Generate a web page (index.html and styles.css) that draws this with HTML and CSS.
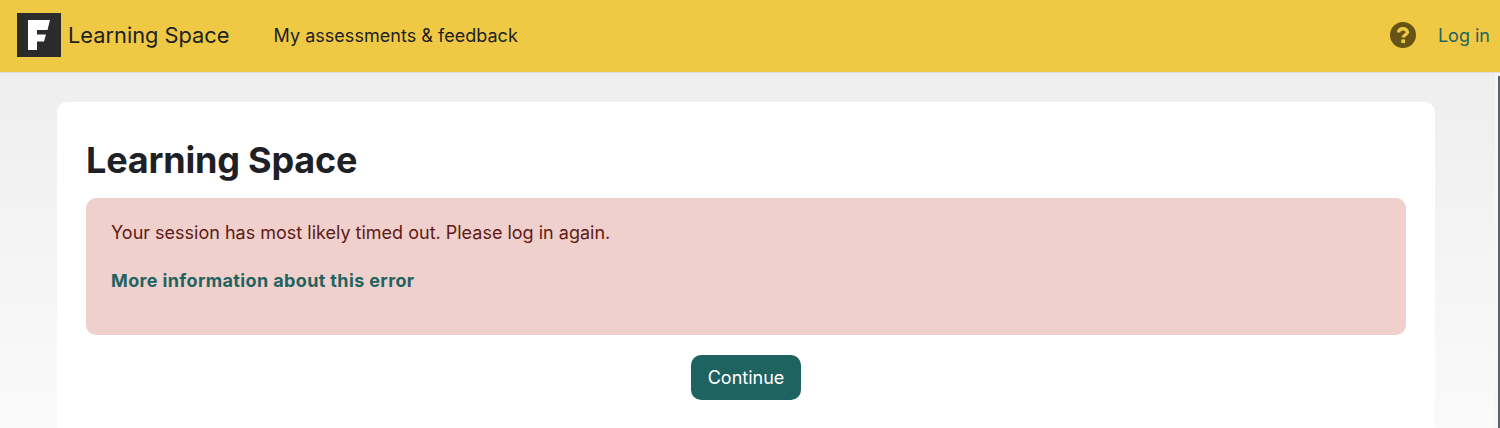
FILE: index.html
```html
<!DOCTYPE html>
<html lang="en">
<head>
  <meta charset="UTF-8" />
  <title>Learning Space</title>
  <link rel="stylesheet" href="styles.css">
</head>
<body>

  <header class="navbar">
    <a class="brand" href="#">
      <span class="logo">
        <svg viewBox="0 0 44 44" width="44" height="44">
          <path fill="#fff" d="M11 7H33L30.500 17H20V21.500H29L27 28.500H20V37H11Z"/>
        </svg>
      </span>
      <span class="brand-name">Learning Space</span>
    </a>
    <a class="nav-link" href="#">My assessments &amp; feedback</a>
    <div class="nav-right">
      <svg class="help" viewBox="0 0 26 26" width="26" height="26">
        <circle cx="13" cy="13" r="13" fill="#665316"/>
        <path fill="none" stroke="#efc944" stroke-width="3.4" d="M8.600 10.400C8.600 8 10.600 6.800 13 6.800C15.600 6.800 17.400 8.200 17.400 10.200C17.400 13 13.200 12.800 13.200 15.600"/>
        <rect x="11.300" y="17.400" width="3.800" height="3.600" fill="#efc944"/>
      </svg>
      <a class="login" href="#">Log in</a>
    </div>
  </header>

  <div class="page">
    <main class="card">
      <h1>Learning Space</h1>
      <div class="alert">
        <p>Your session has most likely timed out. Please log in again.</p>
        <p><a href="#">More information about this error</a></p>
      </div>
      <div class="actions">
        <button>Continue</button>
      </div>
    </main>
  </div>

  <div class="scrollbar"></div>

</body>
</html>
```

FILE: styles.css
```css
html, body {
  height: 100%;
}

body {
  margin: 0;
  font-family: Inter, "Liberation Sans", sans-serif;
  color: #1d2125;
  background: linear-gradient(#ececec, #fafafa);
  overflow: hidden;
}

a {
  text-decoration: none;
}

.navbar {
  display: flex;
  align-items: center;
  box-sizing: border-box;
  height: 73px;
  padding: 0 10px 2px 17px;
  background: #efc944;
  border-bottom: 1px solid #ddd;
}

.brand {
  display: flex;
  align-items: center;
  gap: 7px;
  color: #1d2125;
}

.logo {
  display: block;
  width: 44px;
  height: 44px;
  background: #2b2b2b;
}

.logo svg {
  display: block;
}

.brand-name {
  font-size: 21.8px;
}

.nav-link {
  margin-left: 44px;
  font-size: 18px;
  letter-spacing: 0.03px;
  color: #1d2125;
}

.nav-right {
  display: flex;
  align-items: center;
  gap: 22px;
  margin-left: auto;
}

.help {
  display: block;
}

.login {
  font-size: 18px;
  color: #1f6361;
}

.page {
  padding: 29px 65px 0 57px;
}

.card {
  box-sizing: border-box;
  height: 326px;
  padding: 33px 29px 0;
  background: #fff;
  border-radius: 10px 10px 0 0;
}

h1 {
  margin: 0 0 13px;
  font-size: 36px;
  font-weight: 700;
  letter-spacing: -0.2px;
  line-height: 50px;
}

.alert {
  height: 137px;
  box-sizing: border-box;
  padding: 24px 25px;
  background: #efd0cd;
  border-radius: 10px;
  color: #5f1a15;
  font-size: 18px;
}

.alert p {
  margin: 0 0 26px;
  line-height: 22px;
}

.alert a {
  color: #1f6361;
  font-weight: 700;
  letter-spacing: 0.37px;
}

.actions {
  display: flex;
  justify-content: center;
  margin-top: 20px;
}

button {
  width: 110px;
  height: 45px;
  padding: 0;
  border: none;
  border-radius: 10px;
  background: #1f6361;
  color: #fff;
  font-family: inherit;
  font-size: 18px;
}

/* track and thumb of the window scrollbar */
.scrollbar {
  position: fixed;
  top: 73px;
  right: 0;
  bottom: 0;
  width: 5px;
  background: #f6f6f6;
}

.scrollbar::after {
  content: "";
  position: absolute;
  top: 3px;
  right: 0;
  bottom: 0;
  width: 2px;
  background: #59626a;
}
```
